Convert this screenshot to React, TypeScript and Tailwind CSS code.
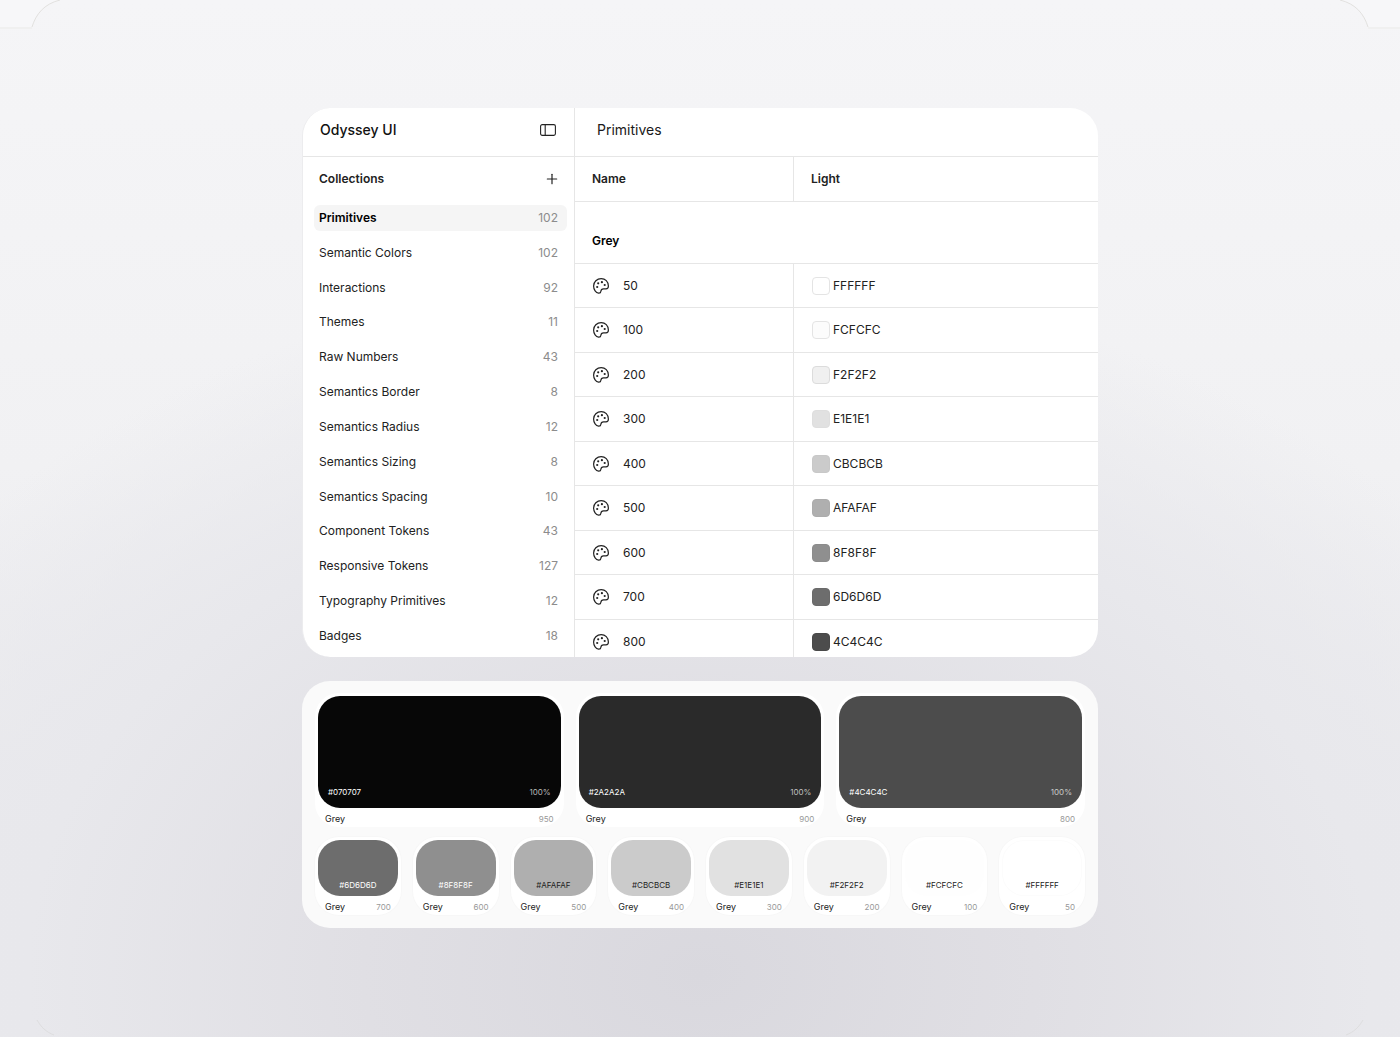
import { Plus } from "lucide-react";

const collections: [string, number][] = [
  ["Primitives", 102],
  ["Semantic Colors", 102],
  ["Interactions", 92],
  ["Themes", 11],
  ["Raw Numbers", 43],
  ["Semantics Border", 8],
  ["Semantics Radius", 12],
  ["Semantics Sizing", 8],
  ["Semantics Spacing", 10],
  ["Component Tokens", 43],
  ["Responsive Tokens", 127],
  ["Typography Primitives", 12],
  ["Badges", 18],
];

const variables = [
  { name: "50", hex: "FFFFFF", fill: "bg-white border-[#e4e4e4]" },
  { name: "100", hex: "FCFCFC", fill: "bg-[#fcfcfc] border-[#e4e4e4]" },
  { name: "200", hex: "F2F2F2", fill: "bg-[#f0f0f0] border-[#dcdcdc]" },
  { name: "300", hex: "E1E1E1", fill: "bg-[#e1e1e1] border-[#dedede]" },
  { name: "400", hex: "CBCBCB", fill: "bg-[#cbcbcb] border-[#c8c8c8]" },
  { name: "500", hex: "AFAFAF", fill: "bg-[#afafaf] border-[#acacac]" },
  { name: "600", hex: "8F8F8F", fill: "bg-[#8f8f8f] border-[#8c8c8c]" },
  { name: "700", hex: "6D6D6D", fill: "bg-[#6d6d6d] border-[#6a6a6a]" },
  { name: "800", hex: "4C4C4C", fill: "bg-[#4c4c4c] border-[#494949]" },
];

const largeSwatches = [
  { name: "950", hex: "#070707", fill: "bg-[#070707]" },
  { name: "900", hex: "#2A2A2A", fill: "bg-[#2a2a2a]" },
  { name: "800", hex: "#4C4C4C", fill: "bg-[#4c4c4c]" },
];

const smallSwatches = [
  { name: "700", hex: "#6D6D6D", fill: "bg-[#6d6d6d] text-white" },
  { name: "600", hex: "#8F8F8F", fill: "bg-[#8f8f8f] text-white" },
  { name: "500", hex: "#AFAFAF", fill: "bg-[#afafaf] text-[#222]" },
  { name: "400", hex: "#CBCBCB", fill: "bg-[#cbcbcb] text-[#222]" },
  { name: "300", hex: "#E1E1E1", fill: "bg-[#e1e1e1] text-[#222]" },
  { name: "200", hex: "#F2F2F2", fill: "bg-[#f2f2f2] text-[#222]" },
  { name: "100", hex: "#FCFCFC", fill: "bg-[#fefefe] text-[#222]" },
  { name: "50", hex: "#FFFFFF", fill: "bg-white text-[#222] inset-ring inset-ring-[#fcfcfc]" },
];

function PaletteIcon() {
  return (
    <svg viewBox="0 0 16 16" className="size-4 shrink-0" fill="none" aria-hidden="true">
      <path
        d="M8.200 .6C4 .6.6 3.800.6 7.900c0 3.800 2.300 7 5 7.300 1.400.1 2.200-.7 2.300-2 .1-1.700.9-2.400 2.600-2.400h2.500c1.500 0 2.400-1 2.400-2.800C15.400 3.700 12.200.6 8.200.6Z"
        stroke="#222"
        strokeWidth="1.200"
        strokeLinejoin="round"
      />
      <g fill="#222">
        <circle cx="4.200" cy="9" r="1.100" />
        <circle cx="5.200" cy="5.300" r="1.100" />
        <circle cx="8.900" cy="4.200" r="1.100" />
        <circle cx="11.700" cy="7" r="1.100" />
      </g>
    </svg>
  );
}

function PanelIcon() {
  return (
    <svg viewBox="0 0 16 12" className="h-3 w-4" fill="none" stroke="#222" aria-hidden="true">
      <rect x=".6" y=".6" width="14.800" height="10.800" rx="1.600" strokeWidth="1.100" />
      <path d="M5.200 .6v10.800" strokeWidth="1.100" />
    </svg>
  );
}

function FrameCorner({ className }: { className: string }) {
  return (
    <svg viewBox="0 0 60 29" className={"absolute h-[29px] w-[60px] " + className} fill="none" aria-hidden="true">
      <path d="M0 28H32C36 14 44 4 60 0H0Z" fill="#f7f7f9" />
      <path d="M0 28H32" stroke="#f0f0f0" strokeWidth="2" />
      <path d="M32 27C36 14 44 4 60 0" stroke="#e2e1df" />
    </svg>
  );
}

function FrameFoot({ className }: { className: string }) {
  return (
    <svg viewBox="0 0 60 20" className={"absolute bottom-0 h-5 w-[60px] " + className} fill="none" aria-hidden="true">
      <path d="M37 3C41 10 46 15 54 18" stroke="#dededf" />
    </svg>
  );
}

function Sidebar() {
  return (
    <aside className="flex w-[272px] shrink-0 flex-col border-r border-[#e6e6e6]">
      <div className="flex h-[49px] shrink-0 items-center justify-between border-b border-[#e6e6e6] pr-[18px] pb-1 pl-[17px]">
        <h1 className="text-sm font-medium text-[#111]">Odyssey UI</h1>
        <button type="button" aria-label="Toggle sidebar">
          <PanelIcon />
        </button>
      </div>
      <div className="flex h-[44px] shrink-0 items-center justify-between pr-3.5 pl-4">
        <h2 className="text-xs font-semibold text-[#222]">Collections</h2>
        <button type="button" aria-label="Add collection">
          <Plus size={16} strokeWidth={1.8} color="#222" />
        </button>
      </div>
      <nav className="flex min-h-0 flex-1 flex-col justify-between pt-1 pr-[7px] pb-2 pl-[11px]">
        {collections.map(([name, count], i) => (
          <a
            key={name}
            href="#"
            aria-current={i === 0 ? "page" : undefined}
            className={
              "flex h-[26px] items-center justify-between rounded-md pr-[9px] pl-[5px] text-xs " +
              (i === 0 ? "bg-[#f5f5f5] font-semibold text-black" : "text-[#222]")
            }
          >
            <span>{name}</span>
            <span className="font-normal text-[#8c8c8c]">{count}</span>
          </a>
        ))}
      </nav>
    </aside>
  );
}

function VariableTable() {
  return (
    <main className="min-w-0 flex-1">
      <div className="flex h-[49px] items-center border-b border-[#e6e6e6] px-[22px] pb-1">
        <h2 className="text-sm text-[#1a1a1a]">Primitives</h2>
      </div>
      <table className="w-full table-fixed border-separate border-spacing-0 text-left text-xs text-[#222]">
        <thead>
          <tr className="h-[45px]">
            <th scope="col" className="w-[219px] border-r border-b border-[#e6e6e6] px-[17px] font-semibold">
              Name
            </th>
            <th scope="col" className="border-b border-[#e6e6e6] px-[17px] font-semibold">
              Light
            </th>
          </tr>
        </thead>
        <tbody>
          <tr className="h-[62px]">
            <th scope="colgroup" colSpan={2} className="border-b border-[#e6e6e6] px-[17px] pt-4 font-semibold text-black">
              Grey
            </th>
          </tr>
          {variables.map((v) => (
            <tr key={v.name} className="odd:h-[45px] even:h-[44px]">
              <td className="border-r border-b border-[#e6e6e6] px-[18px]">
                <div className="flex items-center gap-3.5">
                  <PaletteIcon />
                  {v.name}
                </div>
              </td>
              <td className="border-b border-[#e6e6e6] px-[18px]">
                <div className="flex items-center gap-[3px]">
                  <span className={"size-[18px] rounded border " + v.fill} />
                  {v.hex}
                </div>
              </td>
            </tr>
          ))}
        </tbody>
      </table>
    </main>
  );
}

function SwatchCaption({ name }: { name: string }) {
  return (
    <div className="flex h-[19px] items-center justify-between px-[7px] pt-[2px] leading-[14px]">
      <span className="text-[9px] text-[#222]">Grey</span>
      <span className="text-[8px] text-[#999]">{name}</span>
    </div>
  );
}

export default function App() {
  return (
    <div className="relative flex min-h-screen flex-col items-center overflow-hidden bg-[#f4f4f6] bg-[radial-gradient(ellipse_960px_700px_at_50%_94%,#d9d8de_0%,#e0dfe4_35%,#e8e8ec_70%,#f4f4f600_100%),linear-gradient(#f5f5f7_0%,#f1f1f3_45%,#e9e9ed_80%,#e9e9ed_100%)] px-6 pt-[108px] pb-24 font-['Inter',sans-serif]">
      <FrameCorner className="top-0 left-0" />
      <FrameCorner className="top-0 right-0 -scale-x-100" />
      <FrameFoot className="left-0" />
      <FrameFoot className="right-0 -scale-x-100" />
      <div className="flex w-full max-w-[796px] flex-col gap-6">
        <section className="flex max-h-[549px] overflow-hidden rounded-[28px] border-l border-[#ececee] bg-white">
          <Sidebar />
          <VariableTable />
        </section>
        <section className="flex flex-col gap-2.5 rounded-[28px] bg-[#fafafa] px-[13px] pt-3 pb-[13px]">
          <div className="grid grid-cols-3 gap-3">
            {largeSwatches.map((s) => (
              <article key={s.name} className="rounded-3xl bg-white px-[3px] pt-[3px]">
                <div className={"flex h-[112px] items-end justify-between rounded-[22px] px-2.5 pb-2.5 text-[8px] leading-3 text-white " + s.fill}>
                  <span>{s.hex}</span>
                  <span className="text-white/70">100%</span>
                </div>
                <SwatchCaption name={s.name} />
              </article>
            ))}
          </div>
          <div className="grid grid-cols-8 gap-3">
            {smallSwatches.map((s) => (
              <article key={s.name} className="rounded-3xl bg-white px-[3px] pt-[3px] ring-1 ring-[#f7f7f7]">
                <div className={"flex h-14 items-end justify-center rounded-[22px] pb-[5px] text-[8px] leading-3 " + s.fill}>
                  {s.hex}
                </div>
                <SwatchCaption name={s.name} />
              </article>
            ))}
          </div>
        </section>
      </div>
    </div>
  );
}
